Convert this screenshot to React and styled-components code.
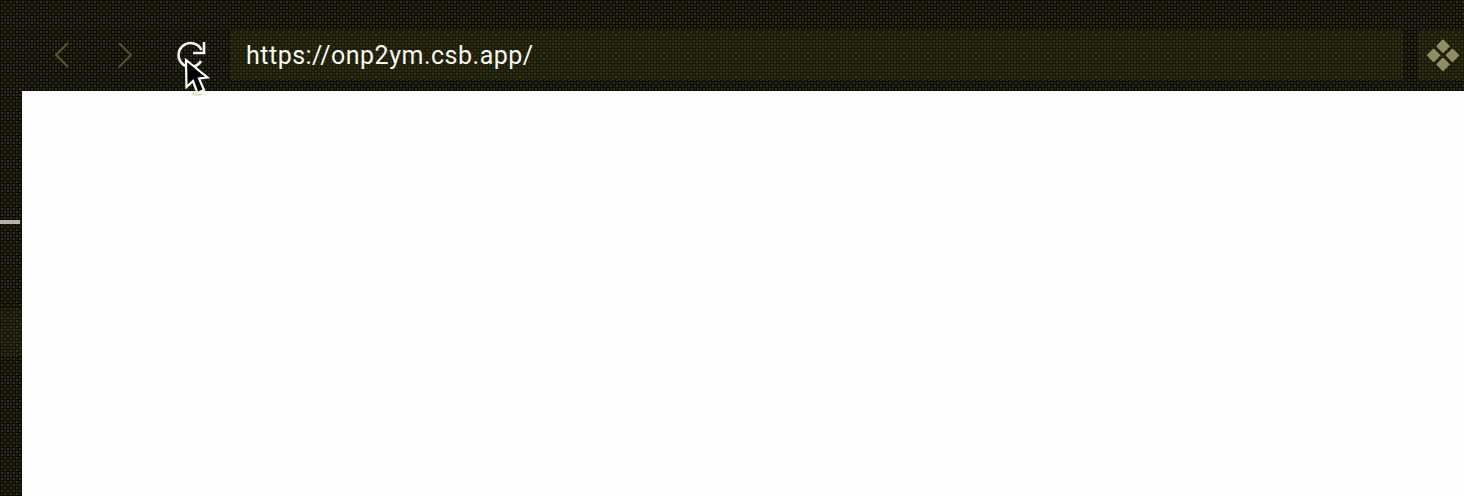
import React from 'react'
import styled, { createGlobalStyle, css } from 'styled-components'

const GlobalStyle = createGlobalStyle`
  html, body {
    margin: 0;
    height: 100%;
    overflow: hidden;
    background: #1c1c0a;
  }
  #root {
    height: 100%;
  }
`

// the capture is a dithered gif, so dark areas are a 3px grid of black with coloured dots
const dither = (dot, alt, line = '#0c0c04') => css`
  background-color: ${line};
  background-image:
    linear-gradient(to right, ${line} 1px, transparent 1px),
    linear-gradient(to bottom, ${line} 1px, transparent 1px),
    repeating-conic-gradient(${dot} 0 25%, ${alt} 0 50%);
  background-size: 3px 3px, 3px 3px, 6px 6px;
`

const Shell = styled.div`
  position: relative;
  display: flex;
  width: 1464px;
  height: 496px;
  overflow: hidden;
  font-family: Roboto, "Liberation Sans", sans-serif;
  ${dither('#34340a', '#1c1c20')}
`

const Rail = styled.aside`
  flex: 0 0 22px;
  display: flex;
  flex-direction: column;
  padding-top: 220px;
`

const RailHandle = styled.div`
  width: 20px;
  height: 4px;
  background: #b4b4a4;
`

const RailPanel = styled.div`
  height: 48px;
  margin-top: 83px;
  ${dither('#36360c', '#22221e', '#14140a')}
`

const Main = styled.main`
  flex: 1;
  display: flex;
  flex-direction: column;
  min-width: 0;
`

const Toolbar = styled.div`
  display: flex;
  align-items: center;
  height: 50px;
  padding: 30px 0 11px 10px;
`

const NavButton = styled.button`
  flex: 0 0 ${(p) => p.$w}px;
  height: 50px;
  padding: 0;
  display: flex;
  align-items: center;
  justify-content: center;
  background: none;
  border: none;
  color: ${(p) => (p.$active ? '#f6f6ee' : '#55552a')};
`

const AddressBar = styled.div`
  flex: 0 0 1174px;
  height: 50px;
  margin-left: 6px;
  box-sizing: border-box;
  padding-left: 16px;
  display: flex;
  align-items: center;
  font-size: 25px;
  letter-spacing: 0.5px;
  color: #f8f8ee;
  ${dither('#36360a', '#24241c', '#1a1a08')}
`

const ExtensionButton = styled.div`
  flex: 0 0 46px;
  height: 50px;
  margin-left: 14px;
  padding-left: 3px;
  box-sizing: border-box;
  display: flex;
  align-items: center;
  justify-content: center;
  ${dither('#36360a', '#24241c', '#1a1a08')}
`

const Content = styled.div`
  flex: 1;
  background: #fdfdff;
`

const Pointer = styled.svg`
  position: absolute;
  left: 183px;
  top: 56px;
`

function ChevronLeft() {
  return (
    <svg width="14" height="26" viewBox="0 0 14 26" fill="none" stroke="currentColor" strokeWidth="2">
      <path d="M13 1 1 13l12 12" />
    </svg>
  )
}

function ChevronRight() {
  return (
    <svg width="14" height="26" viewBox="0 0 14 26" fill="none" stroke="currentColor" strokeWidth="2">
      <path d="M1 1l12 12L1 25" />
    </svg>
  )
}

function Reload() {
  return (
    <svg width="30" height="30" viewBox="0 0 30 30" fill="none" stroke="currentColor" strokeWidth="2.6">
      <path d="M25.5 10A12 12 0 1 0 25 21" />
      <path d="M28 2v11H17" />
    </svg>
  )
}

function Diamonds() {
  return (
    <svg width="32" height="32" viewBox="0 0 32 32" fill="#8e8e62">
      <rect x="11" y="2.2" width="10" height="10" rx="1" transform="rotate(45 16 7.2)" />
      <rect x="1.6" y="11.3" width="10" height="10" rx="1" transform="rotate(45 6.6 16.3)" />
      <rect x="20.4" y="11.3" width="10" height="10" rx="1" transform="rotate(45 25.4 16.3)" />
      <rect x="11" y="20.4" width="10" height="10" rx="1" transform="rotate(45 16 25.4)" />
    </svg>
  )
}

export default function App() {
  return (
    <>
      <GlobalStyle />
      <Shell>
        <Rail>
          <RailHandle />
          <RailPanel />
        </Rail>
        <Main>
          <Toolbar>
            <NavButton $w={60}><ChevronLeft /></NavButton>
            <NavButton $w={66}><ChevronRight /></NavButton>
            <NavButton $w={66} $active><Reload /></NavButton>
            <AddressBar>https://onp2ym.csb.app/</AddressBar>
            <ExtensionButton><Diamonds /></ExtensionButton>
          </Toolbar>
          <Content />
        </Main>
        <Pointer width="28" height="42" viewBox="0 0 28 42">
          <ellipse cx="14" cy="38" rx="5" ry="2" fill="#e4e4c4" />
          <path d="M3 4l.5 27 6.500-6 4.500 12 6.500-3-5-11.500 8.500-1z" fill="#000" stroke="#fff" strokeWidth="2.2" />
        </Pointer>
      </Shell>
    </>
  )
}
